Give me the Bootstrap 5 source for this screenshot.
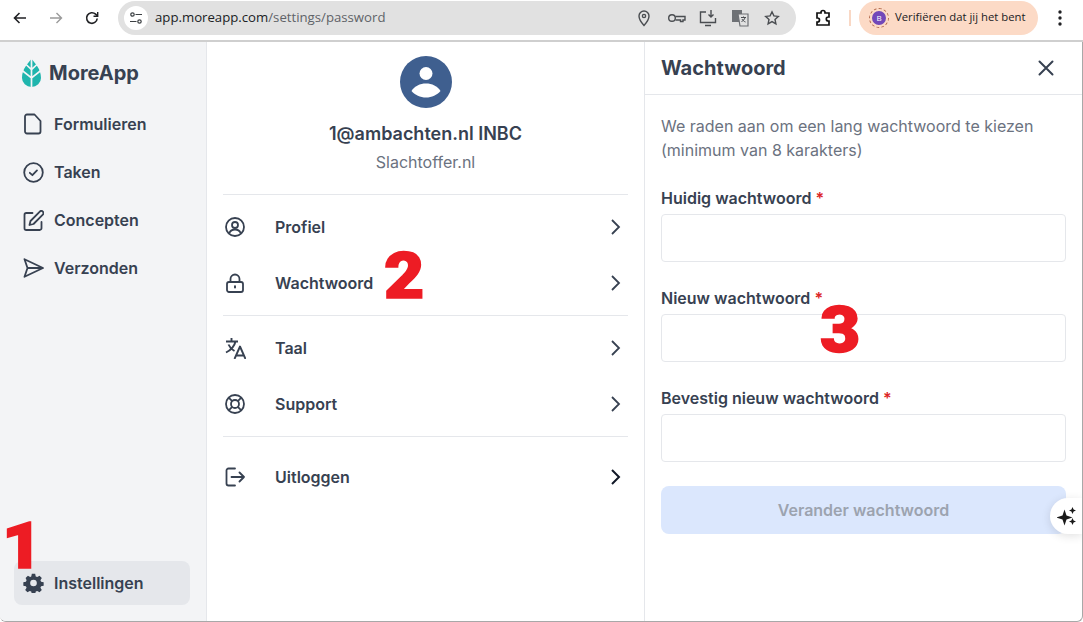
<!DOCTYPE html>
<html lang="en">
<head>
<meta charset="UTF-8">
<title>MoreApp - Wachtwoord</title>
<link href="https://cdn.jsdelivr.net/npm/bootstrap@5.3.0/dist/css/bootstrap.min.css" rel="stylesheet">
<style>
    html, body { height: 100%; overflow: hidden; }
    body { font-family: Inter, "Liberation Sans", sans-serif; color: #374151; background: #fff; position: relative; }
    svg { display: block; flex: none; }

    .browser-bar { height: 42px; border-bottom: 2px solid #cfcfcf; padding: 1px 8px 6px 8px; font-family: "Open Sans", "Liberation Sans", sans-serif; }
    .tool-btn { width: 24px; height: 34px; display: flex; align-items: center; justify-content: center; flex: none; }
    .tool-gap { margin-left: 12px; }
    .ext-btn { margin-left: 15px; }
    .omnibox { width: 678px; flex: none; height: 34px; background: #e1e1e1; border-radius: 17px; margin-left: 14px; padding: 0 14px 0 6px; }
    .tune-btn { width: 24px; height: 24px; background: #fff; border-radius: 50%; display: flex; align-items: center; justify-content: center; margin-right: 7px; }
    .url-text { font-size: 13.2px; color: #5f6368; }
    .url-text b { font-weight: 400; color: #202124; }
    .omni-icons { gap: 12px; }
    .omni-slot { width: 20px; display: flex; justify-content: center; }
    .pill-sep { width: 2px; height: 16px; background: #f9d8c5; margin: 0 8px 0 14px; flex: none; }
    .verify-pill { height: 34px; width: 179px; flex: none; background: #fcdac6; border-radius: 17px; padding-left: 11px; font-size: 11.3px; color: #202124; white-space: nowrap; }
    .verify-avatar { width: 18px; height: 18px; border-radius: 50%; background: #7248b9; color: #fff; font-size: 8px; line-height: 14px; text-align: center; border: 2px solid #fcdac6; outline: 1px dashed #b0674a; margin-right: 7px; }

    .app-wrap { height: 580px; border-right: 1px solid #a8a8a8; border-bottom: 1px solid #a8a8a8; border-radius: 0 0 6px 6px; overflow: hidden; }
    .side-col { width: 207px; background: #f3f4f6; border-right: 1px solid #e5e7eb; padding: 16px 16px 16px 14px; }
    .brand-row { height: 29px; padding-left: 8px; gap: 8px; font-size: 20px; font-weight: 700; color: #374151; margin-bottom: 13px; }
    .side-link { height: 48px; padding-left: 9px; gap: 10px; font-size: 16px; font-weight: 600; color: #374151; text-decoration: none; }
    .side-link.on { height: 44px; background: #e5e7eb; border-radius: 8px; }

    .mid-col { width: 438px; border-right: 1px solid #e5e7eb; padding: 14px 16px 0 16px; }
    .avatar-disc { width: 52px; height: 52px; margin: 0 auto; }
    .acct-name { font-size: 18px; font-weight: 600; line-height: 28px; margin-top: 12px; color: #374151; }
    .acct-org { font-size: 16px; line-height: 24px; color: #6b7280; margin-top: 2px; margin-bottom: 20px; }
    .rule-line { height: 1px; background: #e5e7eb; }
    .menu-group { padding: 4px 0; }
    .menu-row { height: 56px; font-size: 16px; font-weight: 600; color: #374151; text-decoration: none; padding: 0 7px 0 2px; }
    .menu-row .row-icon { width: 50px; }
    .logout-group { padding-top: 12px; }

    .right-col { flex: 1; position: relative; }
    .panel-head { height: 53px; border-bottom: 1px solid #e5e7eb; padding: 0 27px 0 16px; }
    .panel-title { font-size: 20px; font-weight: 700; color: #374151; margin: 0; }
    .panel-body { padding: 19px 16px 0 16px; }
    .panel-intro { font-size: 16px; line-height: 24px; color: #6b7280; margin-bottom: 24px; }
    .field-label { font-size: 16px; font-weight: 600; line-height: 24px; color: #374151; margin-bottom: 4px; display: block; }
    .field-label span { color: #dc2626; }
    .pw-input.form-control { height: 48px; border-color: #e5e7eb; border-radius: 4px; margin-bottom: 24px; }
    .pw-submit.btn { height: 48px; width: 100%; background: #dbe7fd; border: 0; border-radius: 8px; font-weight: 600; color: #9ca3af; opacity: 1; }
    .spark-tab { position: absolute; right: 0; top: 456px; width: 32px; height: 36px; background: #fff; border-radius: 18px 0 0 18px; box-shadow: 0 2px 10px rgba(0,0,0,.12); padding-left: 7px; display: flex; align-items: center; }

    .note-num { position: absolute; font-family: Roboto, "Liberation Sans", sans-serif; font-weight: 900; font-size: 65px; line-height: 65px; color: #ed1c24; -webkit-text-stroke: 1.6px #ed1c24; transform-origin: left top; transform: scaleX(1.07); }
    .note-one { left: 2px; top: 514px; }
    .note-two { left: 384px; top: 244px; }
    .note-three { left: 820px; top: 298px; }
</style>
</head>
<body>

<!-- browser chrome -->
<div class="browser-bar d-flex align-items-center">
    <div class="tool-btn"><svg width="16" height="16" viewBox="0 0 16 16" fill="none" stroke="#202124" stroke-width="1.6"><path d="M14 8H2.5M7.500 3 2.500 8l5 5"/></svg></div>
    <div class="tool-btn tool-gap"><svg width="16" height="16" viewBox="0 0 16 16" fill="none" stroke="#9a9a9a" stroke-width="1.4"><path d="M2 8h11.500M8.500 3l5 5-5 5"/></svg></div>
    <div class="tool-btn tool-gap"><svg width="16" height="16" viewBox="0 0 16 16" fill="none" stroke="#202124" stroke-width="1.6"><path d="M13.200 8.500A5.300 5.300 0 1 1 11.600 4.200L13.500 6"/><path d="M13.700 2v4.300H9.500" stroke-width="1.4"/></svg></div>
    <div class="omnibox d-flex align-items-center">
        <div class="tune-btn"><svg width="14" height="14" viewBox="0 0 14 14" fill="none" stroke="#3c4043" stroke-width="1.2"><circle cx="3.500" cy="3.500" r="1.700"/><path d="M6.500 3.500H13M1 10.500h6.500"/><circle cx="10.500" cy="10.500" r="1.700"/></svg></div>
        <div class="url-text"><b>app.moreapp.com</b>/settings/password</div>
        <div class="omni-icons d-flex align-items-center ms-auto">
            <span class="omni-slot"><svg width="16" height="18" viewBox="0 0 16 18" fill="none" stroke="#4a4d51" stroke-width="1.4"><path d="M8 16.500S3 11 3 7a5 5 0 0 1 10 0c0 4-5 9.500-5 9.500Z"/><circle cx="8" cy="7" r="1.600"/></svg></span>
            <span class="omni-slot"><svg width="19" height="16" viewBox="0 0 19 16" fill="none" stroke="#4a4d51" stroke-width="1.4"><circle cx="5" cy="8" r="3.300"/><path d="M8.500 6.500h9.500v3.500h-2v1.500h-2.500V10H8.500"/></svg></span>
            <span class="omni-slot"><svg width="18" height="18" viewBox="0 0 18 18" fill="none" stroke="#4a4d51" stroke-width="1.4"><path d="M7 3H1.500v10.500h15V9M6 16.500h6"/><path d="M12 1v7M9.500 5.500 12 8l2.500-2.500"/></svg></span>
            <span class="omni-slot"><svg width="18" height="18" viewBox="0 0 18 18"><rect x="1" y="1" width="10" height="12" fill="#6e7175"/><path d="M7 5h10v12H9Z" fill="#e1e1e1" stroke="#6e7175" stroke-width="1.200"/><path d="M10 8.500h5M12.500 7.500v1M14 8.500c-.5 2-2 3.500-3.500 4M11 10c.6 1.200 2 2.500 3.500 3" stroke="#4a4d51" fill="none"/></svg></span>
            <span class="omni-slot"><svg width="16" height="16" viewBox="0 0 16 16" fill="none" stroke="#4a4d51" stroke-width="1.400"><path d="m8 1.800 1.900 4.100 4.400.5-3.300 3 .9 4.400L8 11.600l-3.900 2.200.9-4.400-3.300-3 4.400-.5Z"/></svg></span>
        </div>
    </div>
    <div class="tool-btn ext-btn"><svg width="18" height="18" viewBox="0 0 18 18" fill="none" stroke="#111" stroke-width="1.700"><path d="M7 3.500a2 2 0 0 1 4 0V4h4v4h-.7a2 2 0 0 0 0 4h.7v4H3v-3h.5a2 2 0 0 0 0-4H3V4h4Z"/></svg></div>
    <div class="pill-sep"></div>
    <div class="verify-pill d-flex align-items-center">
        <div class="verify-avatar">B</div>
        <span>Verifiëren dat jij het bent</span>
    </div>
    <div class="tool-btn ms-2 ps-1"><svg width="4" height="16" viewBox="0 0 4 16" fill="#202124"><circle cx="2" cy="2" r="1.700"/><circle cx="2" cy="8" r="1.700"/><circle cx="2" cy="14" r="1.700"/></svg></div>
</div>

<div class="app-wrap d-flex">
    <!-- left navigation -->
    <nav class="side-col d-flex flex-column">
        <div class="brand-row d-flex align-items-center">
            <svg width="19" height="28" viewBox="0 0 19 28"><path d="M9.500 0C13 4 19 10 19 19a9.500 9 0 0 1-19 0C0 10 6 4 9.500 0Z" fill="#1fb5ad"/><path d="M9.500 0v28M3 4.500l6.500 6 6.500-6M-1 10.500l10.500 8.500L20 10.500" fill="none" stroke="#f3f4f6" stroke-width="1.700"/></svg>
            <span>MoreApp</span>
        </div>
        <a class="side-link d-flex align-items-center" href="#">
            <svg width="21" height="22" viewBox="0 0 21 22" fill="none" stroke="#374151" stroke-width="1.800" stroke-linejoin="round"><path d="M4 1.500h7.500l6 6.500v10.500a2 2 0 0 1-2 2H4a2 2 0 0 1-2-2v-15a2 2 0 0 1 2-2Z"/></svg>
            Formulieren
        </a>
        <a class="side-link d-flex align-items-center" href="#">
            <svg width="21" height="21" viewBox="0 0 21 21" fill="none" stroke="#374151" stroke-width="1.800"><circle cx="10.500" cy="10.500" r="9.300"/><path d="m6.800 10.800 2.600 2.400 4.600-4.800" stroke-linecap="round" stroke-linejoin="round"/></svg>
            Taken
        </a>
        <a class="side-link d-flex align-items-center" href="#">
            <svg width="21" height="21" viewBox="0 0 21 21" fill="none" stroke="#374151" stroke-width="1.800" stroke-linecap="round" stroke-linejoin="round"><path d="M9.500 3H3.300A1.800 1.800 0 0 0 1.500 4.800v13.400A1.800 1.800 0 0 0 3.300 20h13.400a1.800 1.800 0 0 0 1.800-1.800V12"/><path d="M16.800 1.600a2.100 2.100 0 0 1 3 3L10.500 14 6.500 15l1-4Z"/></svg>
            Concepten
        </a>
        <a class="side-link d-flex align-items-center" href="#">
            <svg width="21" height="20" viewBox="0 0 21 20" fill="none" stroke="#374151" stroke-width="1.800" stroke-linejoin="round"><path d="M1.500 1.200 20 10 1.500 18.800 4.500 10ZM4.500 10H20"/></svg>
            Verzonden
        </a>
        <a class="side-link on d-flex align-items-center mt-auto" href="#">
            <svg width="21" height="20" viewBox="0 0 24 24" fill="#374151"><path fill-rule="evenodd" d="M10 1h4l.7 3.100 1.800.8 2.700-1.700 2.800 2.800-1.700 2.700.8 1.800 3.100.7v4l-3.100.7-.8 1.800 1.700 2.700-2.800 2.800-2.700-1.700-1.800.8-.7 3.100h-4l-.7-3.100-1.800-.8-2.700 1.700-2.800-2.800 1.700-2.700-.8-1.800-3.100-.7v-4l3.100-.7.8-1.800L2.500 6l2.800-2.800L8 4.900l1.300-.8ZM12 8a4 4 0 1 0 0 8 4 4 0 0 0 0-8Z"/></svg>
            Instellingen
        </a>
    </nav>

    <!-- account menu -->
    <section class="mid-col">
        <svg class="avatar-disc" viewBox="0 0 52 52"><circle cx="26" cy="26" r="26" fill="#3f5f8f"/><circle cx="26" cy="17.500" r="6.500" fill="#fff"/><path d="M11.500 35c3-5 8.500-7.500 14.500-7.500S37.500 30 40.500 35c-3.500 4-8.700 6.500-14.500 6.500S15 39 11.500 35Z" fill="#fff"/></svg>
        <div class="acct-name text-center">1@ambachten.nl INBC</div>
        <div class="acct-org text-center">Slachtoffer.nl</div>
        <div class="rule-line"></div>
        <div class="menu-group">
            <a class="menu-row d-flex align-items-center" href="#">
                <span class="row-icon"><svg width="20" height="20" viewBox="0 0 20 20" fill="none" stroke="#374151" stroke-width="1.800"><circle cx="10" cy="10" r="9"/><circle cx="10" cy="8" r="3"/><path d="M4.300 16c1-2.200 3.200-3.500 5.700-3.500s4.700 1.300 5.700 3.500"/></svg></span>
                Profiel
                <svg class="ms-auto" width="12" height="18" viewBox="0 0 12 18" fill="none" stroke="#374151" stroke-width="1.800"><path d="m3 2 7 7-7 7"/></svg>
            </a>
            <a class="menu-row d-flex align-items-center" href="#">
                <span class="row-icon"><svg width="20" height="20" viewBox="0 0 20 20" fill="none" stroke="#374151" stroke-width="1.800"><rect x="2" y="9" width="16" height="10" rx="2"/><path d="M5.500 9V6a4.500 4.500 0 0 1 9 0v3"/><path d="M10 13.200v1.200" stroke-linecap="round" stroke-width="2"/></svg></span>
                Wachtwoord
                <svg class="ms-auto" width="12" height="18" viewBox="0 0 12 18" fill="none" stroke="#374151" stroke-width="1.800"><path d="m3 2 7 7-7 7"/></svg>
            </a>
        </div>
        <div class="rule-line"></div>
        <div class="menu-group">
            <a class="menu-row d-flex align-items-center" href="#">
                <span class="row-icon"><svg width="21" height="21" viewBox="0 0 21 21" fill="none" stroke="#374151" stroke-width="1.900" stroke-linejoin="round"><path d="M1 3.500h12M6.500 0v3.500M10.500 3.500C9.500 8 6 12 1 14.500M3.500 6.500c1 2.500 3.500 5 6 6.500M9.500 21l5.500-12.500L20.500 21M11 17.500h8"/></svg></span>
                Taal
                <svg class="ms-auto" width="12" height="18" viewBox="0 0 12 18" fill="none" stroke="#374151" stroke-width="1.800"><path d="m3 2 7 7-7 7"/></svg>
            </a>
            <a class="menu-row d-flex align-items-center" href="#">
                <span class="row-icon"><svg width="20" height="20" viewBox="0 0 20 20" fill="none" stroke="#374151" stroke-width="1.800"><circle cx="10" cy="10" r="9"/><circle cx="10" cy="10" r="4"/><path d="m3.700 3.700 3.500 3.500M16.300 3.700l-3.500 3.500M3.700 16.300l3.500-3.500M16.300 16.300l-3.500-3.500"/></svg></span>
                Support
                <svg class="ms-auto" width="12" height="18" viewBox="0 0 12 18" fill="none" stroke="#374151" stroke-width="1.800"><path d="m3 2 7 7-7 7"/></svg>
            </a>
        </div>
        <div class="rule-line"></div>
        <div class="logout-group">
            <a class="menu-row d-flex align-items-center" href="#">
                <span class="row-icon"><svg width="20" height="20" viewBox="0 0 20 20" fill="none" stroke="#374151" stroke-width="1.800" stroke-linecap="round" stroke-linejoin="round"><path d="M10 1.500H3.500a2 2 0 0 0-2 2v13a2 2 0 0 0 2 2H10M6.500 10H19M14.500 5.500 19 10l-4.500 4.500"/></svg></span>
                Uitloggen
                <svg class="ms-auto" width="12" height="18" viewBox="0 0 12 18" fill="none" stroke="#111827" stroke-width="2"><path d="m3 2 7 7-7 7"/></svg>
            </a>
        </div>
    </section>

    <!-- password panel -->
    <section class="right-col">
        <div class="panel-head d-flex align-items-center justify-content-between">
            <h1 class="panel-title">Wachtwoord</h1>
            <svg width="18" height="18" viewBox="0 0 18 18" fill="none" stroke="#374151" stroke-width="2" stroke-linecap="round"><path d="m2.500 2.500 13 13M15.500 2.500l-13 13"/></svg>
        </div>
        <form class="panel-body">
            <p class="panel-intro">We raden aan om een lang wachtwoord te kiezen<br>(minimum van 8 karakters)</p>
            <label class="field-label" for="curPw">Huidig wachtwoord <span>*</span></label>
            <input class="pw-input form-control" type="password" id="curPw">
            <label class="field-label" for="newPw">Nieuw wachtwoord <span>*</span></label>
            <input class="pw-input form-control" type="password" id="newPw">
            <label class="field-label" for="confPw">Bevestig nieuw wachtwoord <span>*</span></label>
            <input class="pw-input form-control" type="password" id="confPw">
            <button class="pw-submit btn" type="button" disabled>Verander wachtwoord</button>
        </form>
        <div class="spark-tab"><svg width="20" height="20" viewBox="0 0 20 20" fill="#1a1a1a"><path d="M7.500 3.500 9.500 9.500l6 2-6 2-2 6-2-6-6-2 6-2ZM15.500 1l1.100 2.400 2.400 1.100-2.400 1.100-1.100 2.400-1.100-2.400L12 4.500l2.400-1.100ZM15.500 12l1.100 2.400 2.400 1.100-2.400 1.100-1.100 2.400-1.100-2.400-2.400-1.100 2.400-1.100Z"/></svg></div>
    </section>
</div>

<!-- red annotations on top of the screenshot -->
<div class="note-num note-one">1</div>
<div class="note-num note-two">2</div>
<div class="note-num note-three">3</div>

</body>
</html>
